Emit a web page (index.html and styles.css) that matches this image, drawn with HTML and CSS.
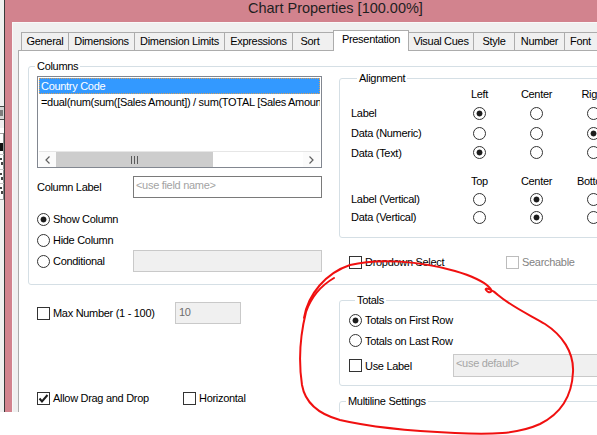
FILE: index.html
```html
<!DOCTYPE html>
<html>
<head>
<meta charset="utf-8">
<title>Chart Properties</title>
<link rel="stylesheet" href="styles.css">
</head>
<body>
<div class="screen">
  <div class="desk">
    <svg class="behind" width="4" height="412" viewBox="0 0 4 412">
      <rect width="4" height="412" fill="#f0f0f0"/>
      <rect x="0" y="106" width="4" height="14" fill="#d6d6d6"/>
      <rect x="0" y="106" width="4" height="1" fill="#4a4a4a"/>
      <rect x="0" y="119" width="4" height="1" fill="#4a4a4a"/>
      <rect x="0" y="110" width="3" height="6" fill="#7c7c7c"/>
      <rect x="0" y="128" width="4" height="72" fill="#ffffff"/>
      <rect x="0" y="133" width="4" height="1" fill="#a0a0a0"/>
      <rect x="3" y="133" width="1" height="67" fill="#8c8c8c"/>
      <rect x="0" y="143" width="3" height="8" fill="#111"/>
      <rect x="0" y="154" width="4" height="1" fill="#c4c4c4"/>
      <rect x="0" y="158" width="2" height="2" fill="#444"/>
      <rect x="1" y="162" width="2" height="3" fill="#444"/>
      <rect x="0" y="169" width="4" height="1" fill="#c4c4c4"/>
      <rect x="0" y="173" width="2" height="2" fill="#444"/>
      <rect x="1" y="177" width="2" height="3" fill="#444"/>
      <rect x="0" y="183" width="4" height="1" fill="#c4c4c4"/>
      <rect x="0" y="187" width="2" height="2" fill="#444"/>
      <rect x="1" y="191" width="2" height="3" fill="#444"/>
      <rect x="0" y="199" width="4" height="1" fill="#a0a0a0"/>
    </svg>
    <div class="win">
      <div class="titlebar">Chart Properties [100.00%]</div>
      <div class="client">
        <div class="tabs">
          <div class="tab w-general">General</div>
          <div class="tab w-dims">Dimensions</div>
          <div class="tab w-limits">Dimension Limits</div>
          <div class="tab w-expr">Expressions</div>
          <div class="tab w-sort">Sort</div>
          <div class="tab sel w-pres">Presentation</div>
          <div class="tab w-cues">Visual Cues</div>
          <div class="tab w-style">Style</div>
          <div class="tab w-number">Number</div>
          <div class="tab w-font">Font</div>
        </div>
        <div class="panel">
          <fieldset class="group columns">
            <legend>Columns</legend>
            <div class="cols-body">
              <div class="cols-left">
                <div class="listbox">
                  <div class="lb-row sel">Country Code</div>
                  <div class="lb-row">=dual(num(sum([Sales Amount]) / sum(TOTAL [Sales Amount]), '#,##0.00%'), sum([Sales Amount]))</div>
                  <div class="lb-fill"></div>
                  <div class="hscroll">
                    <div class="sb-btn">
                      <svg width="5" height="8" viewBox="0 0 5 8"><polyline points="4.5,0.5 1,4 4.5,7.5" fill="none" stroke="#606060" stroke-width="1.2"/></svg>
                    </div>
                    <div class="sb-thumb">
                      <svg width="7" height="8" viewBox="0 0 7 8"><rect x="0" y="0" width="1" height="8" fill="#5a5a5a"/><rect x="3" y="0" width="1" height="8" fill="#5a5a5a"/><rect x="6" y="0" width="1" height="8" fill="#5a5a5a"/></svg>
                    </div>
                    <div class="sb-track"></div>
                    <div class="sb-btn">
                      <svg width="5" height="8" viewBox="0 0 5 8"><polyline points="0.5,0.5 4,4 0.5,7.5" fill="none" stroke="#606060" stroke-width="1.2"/></svg>
                    </div>
                  </div>
                </div>
                <div class="field-row">
                  <span class="fr-label">Column Label</span>
                  <div class="textbox">&lt;use field name&gt;</div>
                </div>
                <div class="opt-row show"><span class="radio on"></span><span>Show Column</span></div>
                <div class="opt-row hide"><span class="radio"></span><span>Hide Column</span></div>
                <div class="opt-row cond">
                  <span class="cond-label"><span class="radio"></span><span>Conditional</span></span>
                  <div class="textbox off w-cond"></div>
                </div>
              </div>
              <div class="cols-right">
                <fieldset class="group align">
                  <legend>Alignment</legend>
                  <div class="align-grid">
                    <span class="blank"></span><span class="hd">Left</span><span class="hd">Center</span><span class="hd">Right</span>
                    <span class="rl">Label</span><span class="rc"><span class="radio on"></span></span><span class="rc"><span class="radio"></span></span><span class="rc"><span class="radio"></span></span>
                    <span class="rl">Data (Numeric)</span><span class="rc"><span class="radio"></span></span><span class="rc"><span class="radio"></span></span><span class="rc"><span class="radio on"></span></span>
                    <span class="rl">Data (Text)</span><span class="rc"><span class="radio on"></span></span><span class="rc"><span class="radio"></span></span><span class="rc"><span class="radio"></span></span>
                    <span class="spacer"></span><span class="spacer"></span><span class="spacer"></span><span class="spacer"></span>
                    <span class="blank"></span><span class="hd">Top</span><span class="hd">Center</span><span class="hd">Bottom</span>
                    <span class="rl">Label (Vertical)</span><span class="rc"><span class="radio"></span></span><span class="rc"><span class="radio on"></span></span><span class="rc"><span class="radio"></span></span>
                    <span class="rl">Data (Vertical)</span><span class="rc"><span class="radio"></span></span><span class="rc"><span class="radio on"></span></span><span class="rc"><span class="radio"></span></span>
                  </div>
                </fieldset>
                <div class="dd-row">
                  <span class="dd-item"><span class="check"></span><span>Dropdown Select</span></span>
                  <span class="dd-item disabled"><span class="check dis"></span><span>Searchable</span></span>
                </div>
              </div>
            </div>
          </fieldset>
          <div class="lower">
            <div class="lower-left">
              <div class="max-row">
                <span class="max-label"><span class="check"></span><span>Max Number (1 - 100)</span></span>
                <div class="textbox off w-max">10</div>
              </div>
              <div class="drag-row">
                <span class="drag-label"><span class="check on"><svg width="11" height="11" viewBox="0 0 11 11"><polyline points="1.5,5.5 4,8.5 9.5,2" fill="none" stroke="#1e1e1e" stroke-width="2"/></svg></span><span>Allow Drag and Drop</span></span>
                <span class="drag-label2"><span class="check"></span><span>Horizontal</span></span>
              </div>
            </div>
            <div class="lower-right">
              <fieldset class="group totals">
                <legend>Totals</legend>
                <div class="opt-row t1"><span class="radio on"></span><span>Totals on First Row</span></div>
                <div class="opt-row t2"><span class="radio"></span><span>Totals on Last Row</span></div>
                <div class="use-row">
                  <span class="use-label"><span class="check"></span><span>Use Label</span></span>
                  <div class="textbox off w-use">&lt;use default&gt;</div>
                </div>
              </fieldset>
              <fieldset class="group multiline">
                <legend>Multiline Settings</legend>
              </fieldset>
            </div>
          </div>
        </div>
      </div>
    </div>
  </div>
  <svg class="annot" width="597" height="435" viewBox="0 0 597 435">
    <path d="M 304 318 C 308 294, 326 273, 350 265 C 378 258, 420 261, 455 271 C 472 276, 484 282, 489 287 C 494 291, 490 295, 486 290 C 484 287, 492 289, 498 295 C 512 307, 530 315, 545 324 C 562 335, 574 352, 573 372 C 572 395, 562 413, 540 424 C 518 434, 490 435, 455 433 C 410 431, 370 427, 340 420 C 318 414, 305 402, 302 385 C 299 365, 299 340, 306 312 C 312 295, 322 285, 334 278" fill="none" stroke="#f01010" stroke-width="2" stroke-linecap="round" stroke-linejoin="round"/>
  </svg>
</div>
</body>
</html>
```

FILE: styles.css
```css
* { box-sizing: border-box; }

html, body {
  margin: 0;
  padding: 0;
  background: #ffffff;
}

body {
  font-family: "Liberation Sans", Arial, sans-serif;
  font-size: 11px;
  letter-spacing: -0.3px;
  color: #000000;
}

.screen {
  position: relative;
  width: 597px;
  height: 435px;
  overflow: hidden;
}

.desk {
  display: flex;
  height: 412px;
}

.behind {
  flex: none;
  display: block;
}

.win {
  flex: none;
  width: 700px;
  display: flex;
  flex-direction: column;
  background: #d2838e;
  border-left: 1px solid #3a3a3a;
}

.titlebar {
  height: 22px;
  padding-left: 243px;
  font-size: 14.5px;
  line-height: 16px;
  letter-spacing: 0;
  color: #1f1f1f;
  white-space: nowrap;
}

.client {
  flex: 1;
  min-height: 0;
  margin-left: 7px;
  background: #f0f0f0;
  border-top: 1px solid #f9f9f9;
  border-left: 1px solid #f9f9f9;
  padding: 7px 0 0 5px;
  display: flex;
  flex-direction: column;
}

/* tabs */
.tabs {
  display: flex;
  align-items: flex-end;
  margin-left: 3px;
}

.tab {
  flex: none;
  height: 18px;
  border: 1px solid #acacac;
  border-bottom: none;
  margin-left: -1px;
  background: #f0f0f0;
  text-align: center;
  line-height: 17px;
  white-space: nowrap;
}

.tab:first-child { margin-left: 0; }

.tab.sel {
  height: 21px;
  background: #ffffff;
  margin-bottom: -1px;
  position: relative;
  z-index: 1;
}

.w-general { width: 48px; }
.w-dims { width: 67px; }
.w-limits { width: 91px; }
.w-expr { width: 69px; }
.w-sort { width: 42px; padding-right: 6px; }
.w-pres { width: 76px; }
.w-cues { width: 66px; }
.w-style { width: 42px; }
.w-number { width: 51px; }
.w-font { width: 50px; text-align: left; padding-left: 5px; }

/* panel */
.panel {
  flex: 1;
  min-height: 0;
  overflow: hidden;
  background: #ffffff;
  border-top: 1px solid #acacac;
  border-left: 1px solid #acacac;
  padding: 9px 0 0 9px;
}

/* group boxes */
.group {
  margin: 0;
  padding: 0;
  min-width: 0;
  border: 1px solid #d5dfe5;
  border-radius: 3px;
}

.group > legend {
  margin-left: 6px;
  padding: 0 2px;
  line-height: 13px;
}

.columns {
  width: 660px;
  padding-bottom: 12px;
}

.cols-body {
  display: flex;
  align-items: flex-start;
}

.cols-left {
  flex: none;
  width: 301px;
  padding-left: 8px;
}

.cols-right {
  flex: none;
  width: 300px;
  margin-left: 9px;
}

/* listbox */
.listbox {
  margin-top: 3px;
  width: 285px;
  height: 92px;
  border: 1px solid #828790;
  padding: 1px 1px 0 1px;
  display: flex;
  flex-direction: column;
  background: #ffffff;
}

.lb-row {
  flex: none;
  height: 16px;
  line-height: 16px;
  padding-left: 2px;
  white-space: nowrap;
  overflow: hidden;
}

.lb-row.sel {
  background: #3399ff;
  color: #ffffff;
  outline: 1px dotted #d9a05a;
  outline-offset: -1px;
}

.lb-fill { flex: 1; }

.hscroll {
  flex: none;
  height: 16px;
  display: flex;
  background: #ffffff;
  border-top: 1px solid #e6e6e6;
}

.sb-btn {
  flex: none;
  width: 17px;
  display: flex;
  align-items: center;
  justify-content: center;
  background: #fbfbfb;
}

.sb-btn svg, .sb-thumb svg { display: block; }

.sb-thumb {
  flex: none;
  width: 157px;
  background: #cdcdcd;
  display: flex;
  align-items: center;
  justify-content: center;
}

.sb-track {
  flex: 1;
  background: #ffffff;
}

/* text boxes */
.textbox {
  flex: none;
  height: 22px;
  border: 1px solid #7a7a7a;
  background: #ffffff;
  padding: 1px 2px 0 2px;
  line-height: 14px;
  color: #a3a3a3;
  white-space: nowrap;
  overflow: hidden;
}

.textbox.off {
  background: #f0f0f0;
  border-color: #c9c9c9;
}

.field-row {
  margin-top: 8px;
  height: 22px;
  display: flex;
  align-items: center;
}

.fr-label { width: 96px; flex: none; }

.field-row .textbox { width: 189px; }

.opt-row {
  display: flex;
  align-items: center;
  gap: 3px;
  height: 20px;
  white-space: nowrap;
}

.opt-row.show { margin-top: 11px; }
.opt-row.hide { margin-top: 1px; height: 20px; }
.opt-row.cond { height: 22px; gap: 0; }

.cond-label {
  width: 96px;
  flex: none;
  display: flex;
  align-items: center;
  gap: 3px;
}

.w-cond { width: 189px; }

/* radio & check */
.radio {
  flex: none;
  display: inline-block;
  width: 13px;
  height: 13px;
  border: 1px solid #333333;
  border-radius: 50%;
  background: #ffffff;
}

.radio.on {
  background: radial-gradient(circle, #1c1c1c 0, #1c1c1c 2.6px, #ffffff 3.3px);
}

.check {
  flex: none;
  display: inline-flex;
  align-items: center;
  justify-content: center;
  width: 13px;
  height: 13px;
  border: 1px solid #333333;
  background: #ffffff;
}

.check svg { display: block; }

.check.dis { border-color: #bcbcbc; }

/* alignment */
.align {
  width: 100%;
  padding: 0 0 11px 11px;
}

.align > legend { line-height: 11px; }

.align-grid {
  display: grid;
  grid-template-columns: 100px 57px 57px 57px;
  grid-template-rows: 19px 20px 20px 19px 9px 19px 18px 18px;
  align-items: center;
}

.hd {
  text-align: center;
  white-space: nowrap;
}

.rl { white-space: nowrap; }

.rc {
  display: flex;
  justify-content: center;
  align-items: center;
}

.dd-row {
  margin-top: 14px;
  height: 20px;
  padding-left: 10px;
  display: flex;
  align-items: center;
}

.dd-item {
  display: flex;
  align-items: center;
  gap: 3px;
  white-space: nowrap;
}

.dd-item:first-child { width: 157px; flex: none; }

.dd-item.disabled { color: #838383; }

/* lower area */
.lower {
  display: flex;
  align-items: flex-start;
}

.lower-left {
  flex: none;
  width: 311px;
  padding: 17px 0 0 9px;
}

.max-row {
  height: 22px;
  display: flex;
  align-items: center;
}

.max-label {
  flex: none;
  width: 138px;
  display: flex;
  align-items: center;
  gap: 3px;
  white-space: nowrap;
}

.w-max {
  width: 66px;
  color: #6d6d6d;
  padding-top: 2px;
  padding-left: 3px;
}

.drag-row {
  margin-top: 64px;
  height: 20px;
  display: flex;
  align-items: center;
}

.drag-label {
  flex: none;
  width: 146px;
  display: flex;
  align-items: center;
  gap: 3px;
  white-space: nowrap;
}

.drag-label2 {
  display: flex;
  align-items: center;
  gap: 3px;
  white-space: nowrap;
}

.lower-right {
  flex: none;
  width: 300px;
  padding-top: 9px;
}

.totals {
  padding: 3px 0 8px 9px;
}

.totals .opt-row.t1 { height: 20px; }
.totals .opt-row.t2 { height: 21px; }

.use-row {
  margin-top: 3px;
  height: 23px;
  display: flex;
  align-items: center;
}

.use-label {
  flex: none;
  width: 104px;
  display: flex;
  align-items: center;
  gap: 3px;
  white-space: nowrap;
}

.w-use {
  width: 200px;
  height: 23px;
  color: #a6a6a6;
  padding-top: 1px;
}

.multiline {
  margin-top: 9px;
  height: 60px;
}

/* annotation overlay */
.annot {
  position: absolute;
  left: 0;
  top: 0;
  pointer-events: none;
}
```
